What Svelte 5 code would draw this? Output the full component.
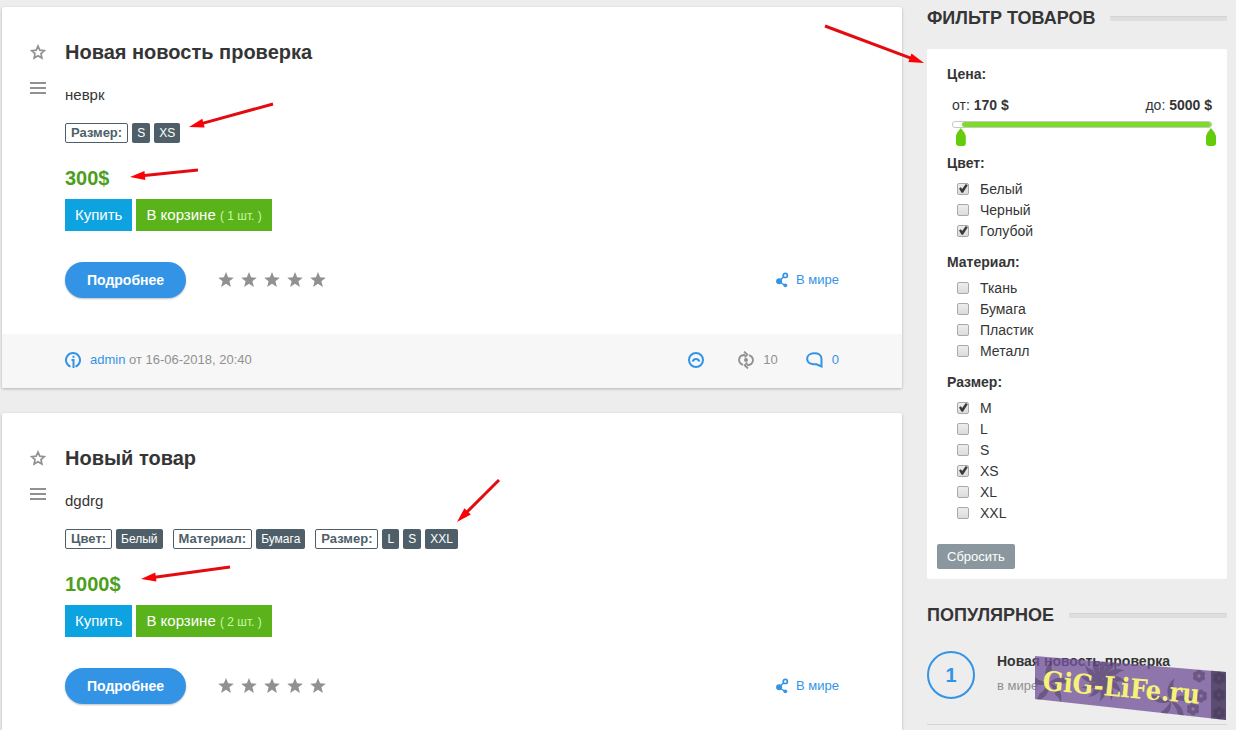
<script lang="ts">
  type Tag = { name: string; values: string[] };
  type Meta = { author: string; date: string; views: number; comments: number };
  type Product = { title: string; text: string; tags: Tag[]; price: number; count: number; meta?: Meta };
  type Group = { name: string; options: { label: string; on: boolean }[] };

  const products: Product[] = [
    {
      title: 'Новая новость проверка',
      text: 'неврк',
      tags: [{ name: 'Размер', values: ['S', 'XS'] }],
      price: 300,
      count: 1,
      meta: { author: 'admin', date: '16-06-2018, 20:40', views: 10, comments: 0 },
    },
    {
      title: 'Новый товар',
      text: 'dgdrg',
      tags: [
        { name: 'Цвет', values: ['Белый'] },
        { name: 'Материал', values: ['Бумага'] },
        { name: 'Размер', values: ['L', 'S', 'XXL'] },
      ],
      price: 1000,
      count: 2,
    },
  ];

  function makeGroups(): Group[] {
    return [
      { name: 'Цвет', options: [
        { label: 'Белый', on: true }, { label: 'Черный', on: false }, { label: 'Голубой', on: true },
      ] },
      { name: 'Материал', options: [
        { label: 'Ткань', on: false }, { label: 'Бумага', on: false },
        { label: 'Пластик', on: false }, { label: 'Металл', on: false },
      ] },
      { name: 'Размер', options: [
        { label: 'M', on: true }, { label: 'L', on: false }, { label: 'S', on: false },
        { label: 'XS', on: true }, { label: 'XL', on: false }, { label: 'XXL', on: false },
      ] },
    ];
  }

  const MAX = 5000;
  let groups = $state(makeGroups());
  let from = $state(170);
  let to = $state(MAX);

  // tail x/y, tip x/y
  const arrows = [
    [273, 104, 189, 127],
    [198, 170, 130, 177],
    [499, 480, 457, 522],
    [230, 567, 141, 579],
    [825, 26, 924, 63],
  ];

  function reset() {
    from = 0;
    to = MAX;
    for (const g of groups) for (const o of g.options) o.on = false;
  }

  function arrow([x1, y1, x2, y2]: number[]) {
    return {
      len: Math.hypot(x2 - x1, y2 - y1),
      angle: (Math.atan2(y2 - y1, x2 - x1) * 180) / Math.PI,
    };
  }
</script>

{#snippet star()}
  <svg width="16" height="16" viewBox="0 0 16 16" aria-hidden="true">
    <path d="M8 0l2.1 5.3 5.7.4-4.4 3.6 1.5 5.6L8 11.8l-4.9 3.1 1.5-5.6L.2 5.7l5.7-.4z" fill="currentColor" />
  </svg>
{/snippet}

<div class="page">
  <main>
    {#each products as p (p.title)}
      <article class="card">
        <div class="body">
          <div class="tools">
            <button class="tool" aria-label="В закладки">
              <svg width="16" height="16" viewBox="0 0 16 16">
                <path d="M8 2l1.8 4.1 4.5.5-3.3 3 .9 4.4L8 11.7 4.1 14l.9-4.4-3.3-3 4.5-.5z" fill="none" stroke="currentColor" stroke-width="1.7" />
              </svg>
            </button>
            <button class="tool" aria-label="Меню">
              <svg width="16" height="12" viewBox="0 0 16 12">
                <path d="M0 1h16M0 6h16M0 11h16" stroke="currentColor" stroke-width="2" />
              </svg>
            </button>
          </div>
          <div class="content">
            <h2>{p.title}</h2>
            <p class="text">{p.text}</p>
            <div class="tags">
              {#each p.tags as t (t.name)}
                <div class="tag-group">
                  <b class="tag-name">{t.name}:</b>
                  {#each t.values as v (v)}<span class="tag">{v}</span>{/each}
                </div>
              {/each}
            </div>
            <div class="price">{p.price}$</div>
            <div class="buy">
              <button class="btn-buy">Купить</button>
              <button class="btn-cart">В корзине <small>( {p.count} шт. )</small></button>
            </div>
            <div class="more">
              <a class="btn-more" href="#more">Подробнее</a>
              <div class="rating">
                {#each [1, 2, 3, 4, 5] as n (n)}
                  <button aria-label="Оценка {n}">{@render star()}</button>
                {/each}
              </div>
              <a class="category" href="#world">
                <svg width="13" height="16" viewBox="0 0 13 16" fill="currentColor" aria-hidden="true">
                  <path d="M4 8.500L8 4.500M4 10l5 3.500" stroke="currentColor" stroke-width="1.500" />
                  <circle cx="3.100" cy="9.200" r="3" />
                  <circle cx="9.300" cy="3.400" r="2.100" fill="#fff" stroke="currentColor" stroke-width="1.700" />
                  <circle cx="9.300" cy="13.300" r="1.900" />
                </svg>
                В мире
              </a>
            </div>
          </div>
        </div>
        {#if p.meta}
          <footer>
            <svg class="blue" width="16" height="16" viewBox="0 0 16 16" fill="none" stroke="currentColor" stroke-width="2" aria-hidden="true">
              <path d="M5.500 14.600A7 7 0 1 1 10.500 14.600M8.500 7v9M6.500 8H8.500" />
              <path d="M7.500 4.800h2" />
            </svg>
            <span><a href="#admin">{p.meta.author}</a> от {p.meta.date}</span>
            <div class="stats">
              <button class="up" aria-label="Наверх">
                <svg width="16" height="16" viewBox="0 0 16 16" fill="none" stroke="currentColor" stroke-width="2">
                  <circle cx="8" cy="8" r="7" />
                  <path d="M4.500 9.500C6 6.200 10 6.200 11.500 9.500" />
                </svg>
              </button>
              <span class="stat">
                <svg width="16" height="18" viewBox="0 0 16 18" fill="none" stroke="currentColor" stroke-width="1.900" aria-hidden="true">
                  <path d="M5 13.800C-.6 11.500 -.4 4.500 7 3.800M11 4.200C16.600 6.500 16.400 13.500 9 14.200" />
                  <path d="M6 .6l3.200 3-2.400 2.800M10 17.400l-3.200-3 2.400-2.800" />
                  <circle cx="8" cy="9" r="2" fill="currentColor" stroke="none" />
                </svg>
                {p.meta.views}
              </span>
              <a class="stat" href="#comments">
                <svg width="17" height="16" viewBox="0 0 17 16" fill="none" stroke="currentColor" stroke-width="2" aria-hidden="true">
                  <path d="M7.500 1.300C12.500.8 15.500 3 15.500 7v7.500L10.500 12.300H7.500C-1 11.500-1 2 7.500 1.300z" />
                </svg>
                {p.meta.comments}
              </a>
            </div>
          </footer>
        {/if}
      </article>
    {/each}
  </main>

  <aside>
    <h3>ФИЛЬТР ТОВАРОВ</h3>
    <form class="filter" onsubmit={(e) => e.preventDefault()}>
      <h4>Цена:</h4>
      <div class="range-labels">
        <span>от: <b>{from} $</b></span>
        <span>до: <b>{to} $</b></span>
      </div>
      <div class="range">
        <div class="track">
          <div class="fill" style="left: {(from / MAX) * 100}%; right: {100 - (to / MAX) * 100}%"></div>
        </div>
        <input type="range" min="0" max={MAX} step="10" bind:value={from} aria-label="Цена от" />
        <input type="range" min="0" max={MAX} step="10" bind:value={to} aria-label="Цена до" />
      </div>
      {#each groups as g (g.name)}
        <fieldset>
          <legend>{g.name}:</legend>
          {#each g.options as o (o.label)}
            <label><input type="checkbox" bind:checked={o.on} />{o.label}</label>
          {/each}
        </fieldset>
      {/each}
      <button class="reset" type="button" onclick={reset}>Сбросить</button>
    </form>

    <h3 class="popular-title">ПОПУЛЯРНОЕ</h3>
    <div class="popular">
      <span class="num">1</span>
      <div>
        <a href="#popular">Новая новость проверка</a>
        <p>в мире</p>
      </div>
      <svg class="stamp" width="192" height="66" viewBox="0 0 192 66">
        <defs>
          <clipPath id="band"><path d="M0 1l191 16v48L0 44z" /></clipPath>
          <g id="flower">
            {#each [0, 60, 120, 180, 240, 300] as a (a)}
              <circle cx="0" cy="-4" r="2.500" transform="rotate({a})" />
            {/each}
          </g>
          <path id="leaf" d="M0 0C3-8 12-13 22-8C17-8 15-6 13-4C11-5 6-3 0 0z" />
        </defs>
        <g clip-path="url(#band)">
          <path d="M0 0h192v66H0z" fill="#75569b" opacity=".78" />
          <path d="M176 0h16v66h-16z" fill="#39334a" opacity=".6" />
          <g fill="#423354" opacity=".45">
            {#each [0, 30, 60, 90, 120, 150, 180, 210, 240, 270, 300, 330] as a (a)}
              <use href="#leaf" transform="translate(68 24) rotate({a})" />
            {/each}
            {#each [20, 80, 150, 220, 300] as a (a)}
              <use href="#leaf" transform="translate(136 46) rotate({a})" />
              <use href="#leaf" transform="translate(14 28) rotate({a})" />
            {/each}
            <use href="#flower" x="164" y="21" />
            <use href="#flower" x="184" y="23" />
            <use href="#flower" x="166" y="41" />
            <use href="#flower" x="184" y="40" />
            <use href="#flower" x="158" y="54" />
            <use href="#flower" x="184" y="58" />
          </g>
        </g>
        <text x="7" y="35" transform="rotate(5 7 35)">GiG-LiFe.ru</text>
      </svg>
    </div>
  </aside>

  <svg class="arrows" width="1" height="1" aria-hidden="true">
    {#each arrows as a}
      {@const s = arrow(a)}
      <g transform="translate({a[0]} {a[1]}) rotate({s.angle})">
        <path d="M0 0H{s.len - 12}" stroke="#e30b10" stroke-width="3" />
        <path d="M{s.len} 0l-15-4.500v9z" fill="#fd0006" />
      </g>
    {/each}
  </svg>
</div>

<style>
  :global(body) { background: #ededed; }
  .page { position: relative; display: grid; grid-template-columns: 1fr 300px; gap: 25px;
          height: 100vh; box-sizing: border-box; padding: 7px 9px 0 2px; overflow: hidden;
          font: 14px/20px "Liberation Sans", Arial, sans-serif; color: #353535; }
  h2, h3, h4, p { margin: 0; }
  a { color: #3394e6; text-decoration: none; }
  button { border: 0; padding: 0; background: none; color: inherit; font: inherit; cursor: pointer; }
  svg { display: block; }

  .card { margin-bottom: 25px; background: #fff; border-radius: 2px;
          box-shadow: 0 1px 3px rgba(0, 0, 0, 0.25); }
  .body { display: grid; grid-template-columns: 63px 1fr; padding: 31px 63px 36px 0; }
  .tools { display: flex; flex-direction: column; gap: 22px; padding: 6px 0 0 28px;
           color: #919191; }
  .tool { width: 16px; }
  h2 { font-size: 20px; line-height: 28px; }
  .text { margin: 19px 0 18px; font-size: 15px; }
  .tags { display: flex; gap: 10px; font-size: 12px; line-height: 20px; }
  .tag-group { display: flex; gap: 4px; }
  .tag-name { padding: 0 5px; border: 1px solid #4e5f69; border-radius: 2px; color: #4e5f69;
              font-size: 13px; line-height: 18px; }
  .tag { padding: 0 5px; border-radius: 2px; background: #4e5f69; color: #fff; }
  .price { margin: 23px 0 9px; color: #4c9f1d; font-size: 20px; font-weight: bold; line-height: 24px; }
  .buy { display: flex; gap: 4px; font-size: 15px; color: #fff; }
  .buy button { height: 32px; padding: 0 10px; }
  .btn-buy { background: #0ca3e0; }
  .btn-cart { background: #5bb31b; }
  .btn-cart small { color: #c8f7a5; font-size: 12px; }
  .more { display: flex; align-items: center; margin-top: 31px; }
  .btn-more { padding: 0 22px; border-radius: 18px; background: #3394e6; color: #fff;
              font-weight: bold; line-height: 36px; box-shadow: 0 1px 2px rgba(0, 0, 0, 0.25); }
  .rating { display: flex; gap: 7px; margin-left: 32px; color: #919191; }
  .category { display: flex; align-items: center; gap: 7px; margin-left: auto; font-size: 13px; }
  footer { display: flex; align-items: center; gap: 9px; padding: 16px 63px 18px; background: #f7f7f7;
           border-radius: 0 0 2px 2px; color: #919191; font-size: 13px; }
  .blue { color: #3394e6; }
  .stats { display: flex; align-items: center; gap: 28px; margin-left: auto; }
  .up { margin-right: 6px; color: #3394e6; }
  .stat { display: flex; align-items: center; gap: 9px; }

  h3 { display: flex; align-items: center; gap: 15px; font-size: 18px; line-height: 22px; }
  h3::after { content: ""; flex: 1; height: 4px; border-top: 1px solid #d4d4d4; background: #dedede; }
  .filter { margin-top: 20px; padding: 15px 10px 10px; border-radius: 2px; background: #fff; }
  h4 { padding-left: 10px; font-size: 14px; }
  .range-labels { display: flex; justify-content: space-between; margin: 11px 5px 6px 15px; }
  .range { position: relative; height: 25px; margin: 0 5px 0 15px; }
  .track { position: relative; height: 5px; border: 1px solid #c8c8c8; border-radius: 3px; }
  .fill { position: absolute; top: 0; bottom: 0; border-radius: 3px; background: #7edb27; }
  .range input { position: absolute; top: 7px; left: -5px; width: calc(100% + 9px); height: 18px;
                 margin: 0; appearance: none; background: none; pointer-events: none; }
  .range input::-webkit-slider-thumb { appearance: none; width: 10px; height: 18px;
    border-radius: 0 0 3px 3px; background: #65cc0c; pointer-events: auto;
    clip-path: polygon(50% 0, 85% 25%, 100% 45%, 100% 100%, 0 100%, 0 45%, 15% 25%); }
  fieldset { margin: 7px 0 0; padding: 0 0 0 20px; border: 0; }
  fieldset + fieldset { margin-top: 10px; }
  legend { margin: 0 0 6px -10px; padding: 0; font-weight: bold; }
  label { display: flex; align-items: center; gap: 11px; line-height: 21px; }
  label input { appearance: none; box-sizing: border-box; width: 12px; height: 12px; margin: 0 0 2px;
                border: 1px solid #a9a9a9; border-radius: 2px;
                background: linear-gradient(#ededed, #dcdcdc); }
  label input:checked::before { content: ""; display: block; width: 10px; height: 10px;
    background: #3b3b3b;
    clip-path: polygon(10% 50%, 28% 38%, 42% 55%, 78% 5%, 98% 18%, 50% 92%, 36% 92%); }
  .reset { margin-top: 20px; padding: 0 10px; border-radius: 2px; background: #8a979e;
           color: #fff; font-size: 13px; line-height: 25px; }

  .popular-title { margin-top: 25px; }
  .popular { position: relative; display: flex; gap: 22px; margin-top: 25px; padding-bottom: 25px;
             border-bottom: 1px solid #d5d5d5; }
  .num { box-sizing: border-box; width: 48px; height: 48px; border: 2px solid #3394e6;
         border-radius: 50%; color: #3394e6; font-size: 20px; font-weight: bold;
         line-height: 44px; text-align: center; }
  .popular a { color: #353535; font-weight: bold; }
  .popular p { margin-top: 5px; color: #919191; font-size: 13px; }
  .stamp { position: absolute; top: 4px; right: 0; overflow: visible; }
  .stamp text { fill: #f6f277; font: bold 27px "DejaVu Serif Condensed", "DejaVu Serif", serif; }
  .arrows { position: absolute; top: 0; left: 0; overflow: visible; pointer-events: none; }
</style>
